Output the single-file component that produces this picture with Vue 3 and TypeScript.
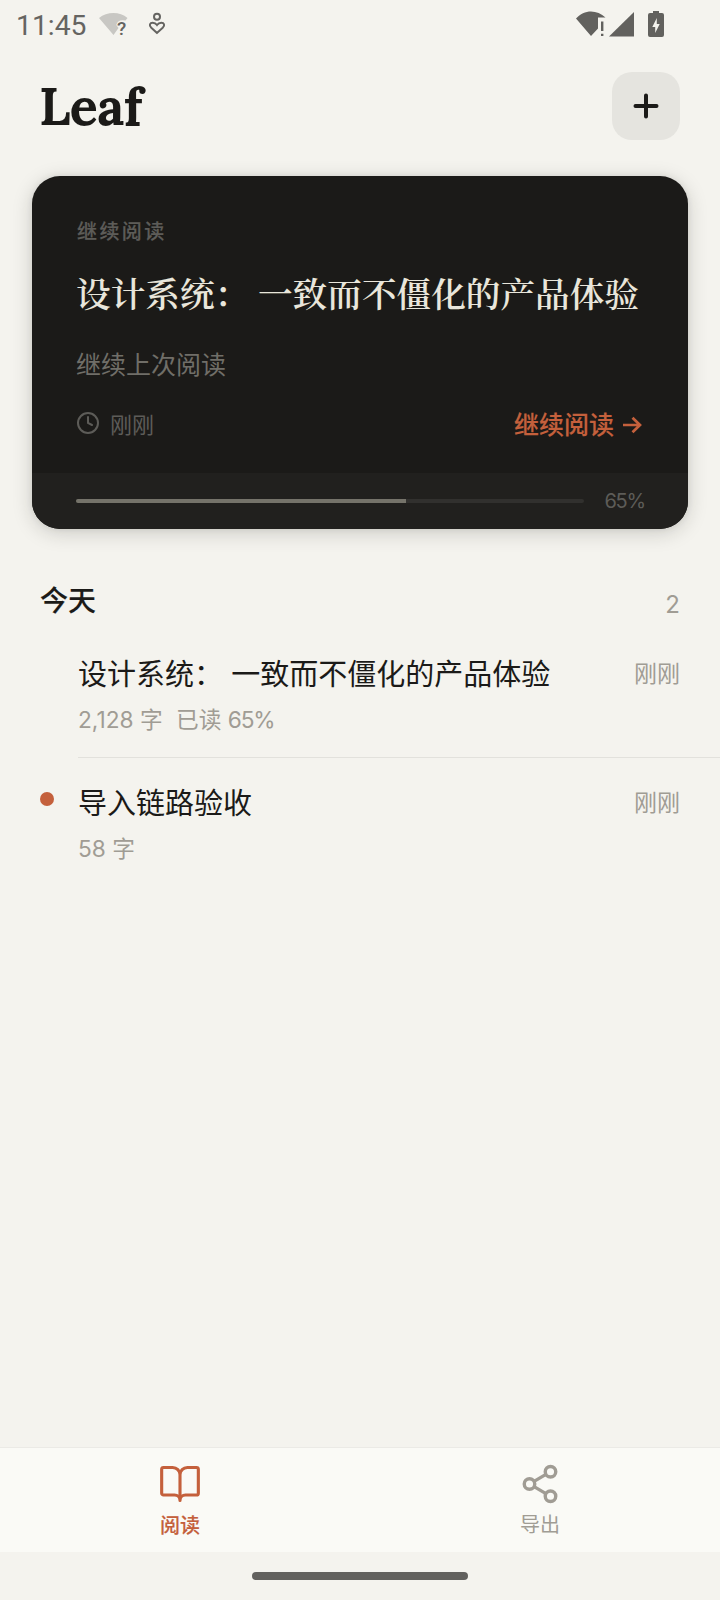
<script setup lang="ts">
interface Article {
  title: string
  words: string
  progress?: number
  time: string
  unread: boolean
}

const current = { title: '设计系统： 一致而不僵化的产品体验', hint: '继续上次阅读', time: '刚刚', progress: 65 }

const articles: Article[] = [
  { title: '设计系统： 一致而不僵化的产品体验', words: '2,128 字', progress: 65, time: '刚刚', unread: false },
  { title: '导入链路验收', words: '58 字', time: '刚刚', unread: true },
]
</script>

<template>
  <div class="screen">
    <div class="status">
      <span class="clock">11:45</span>
      <svg class="wifi-unknown" width="32" height="30" viewBox="0 0 32 30">
        <path d="M0 6C8-.8 21-.8 28.500 6L26.500 8.500Q18.500 7 17.300 13L19.500 16L14.500 23Z" fill="#c8c7c3" />
        <text x="18" y="22.700" class="mark">?</text>
      </svg>
      <svg class="care" width="18" height="24" viewBox="0 0 18 24" fill="none" stroke="#656461" stroke-width="2">
        <circle cx="9" cy="4.800" r="3" />
        <path d="M9 21L3.300 15.800C.6 13.200 2 10.700 4.700 10.700C6.700 10.700 8 11.600 9 13C10 11.600 11.300 10.700 13.300 10.700C16 10.700 17.400 13.200 14.700 15.800Z" />
      </svg>
      <svg class="system" width="90" height="28" viewBox="0 0 90 28" fill="#62615e">
        <path d="M0 7.500C8-1.800 21-1.800 29.500 6.500H22V17.500L15 25Z" />
        <path d="M25 10.500h2.400v9.500H25zM25 22.700h2.400v2.400H25z" />
        <path d="M58 1V25.500H33Z" />
        <path fill-rule="evenodd" d="M77 0h6v2h3q2 0 2 2V24q0 2-2 2H74q-2 0-2-2V4q0-2 2-2h3zM80.800 7L76.300 16h2.900v6L83.700 13h-2.900z" />
      </svg>
    </div>

    <header class="header">
      <h1>Leaf</h1>
      <button class="add" aria-label="添加">
        <svg width="68" height="68" viewBox="0 0 68 68" fill="none" stroke="#1b1a18" stroke-width="4" stroke-linecap="round">
          <path d="M23.500 34h21M34 23.500v21" />
        </svg>
      </button>
    </header>

    <section class="card">
      <div class="card-body">
        <div class="label">继续阅读</div>
        <h2>{{ current.title }}</h2>
        <p>{{ current.hint }}</p>
        <div class="card-row">
          <svg width="24" height="24" viewBox="0 0 24 24" fill="none" stroke="#5d5c58" stroke-width="2" stroke-linecap="round">
            <circle cx="12" cy="12" r="10" />
            <path d="M12 6v6l4 2" />
          </svg>
          <span class="card-time">{{ current.time }}</span>
          <span class="continue">继续阅读</span>
          <svg class="arrow" width="20" height="18" viewBox="0 0 20 18" fill="none" stroke="#c4603c" stroke-width="2.700">
            <path d="M1 9h17M10.500 1.700L18 9l-7.500 7.300" />
          </svg>
        </div>
      </div>
      <div class="card-foot">
        <div class="track"><div class="fill" :style="{ width: current.progress + '%' }"></div></div>
        <span class="percent">{{ current.progress }}%</span>
      </div>
    </section>

    <main>
      <div class="group"><h3>今天</h3><span>{{ articles.length }}</span></div>
      <article v-for="a in articles" :key="a.title" class="item">
        <div class="gutter"><i v-if="a.unread" class="dot"></i></div>
        <div class="content">
          <div class="top"><span class="title">{{ a.title }}</span><span class="time">{{ a.time }}</span></div>
          <div class="meta">
            <span>{{ a.words }}</span>
            <span v-if="a.progress">已读 <span class="percent">{{ a.progress }}%</span></span>
          </div>
        </div>
      </article>
    </main>

    <nav>
      <div class="tab active">
        <svg width="44" height="44" viewBox="0 0 24 24" fill="none" stroke="currentColor" stroke-width="1.700" stroke-linecap="round" stroke-linejoin="round">
          <path d="M12 7v14M3 18a1 1 0 0 1-1-1V4a1 1 0 0 1 1-1h5a4 4 0 0 1 4 4 4 4 0 0 1 4-4h5a1 1 0 0 1 1 1v13a1 1 0 0 1-1 1h-6a3 3 0 0 0-3 3 3 3 0 0 0-3-3z" />
        </svg>
        <span>阅读</span>
      </div>
      <div class="tab">
        <svg width="42" height="42" viewBox="0 0 24 24" fill="none" stroke="currentColor" stroke-width="1.950">
          <circle cx="18" cy="5" r="3" /><circle cx="6" cy="12" r="3" /><circle cx="18" cy="19" r="3" />
          <path d="M8.600 13.500l6.800 4M15.400 6.500l-6.800 4" />
        </svg>
        <span>导出</span>
      </div>
    </nav>
    <div class="home"><i></i></div>
  </div>
</template>

<style>
body { margin: 0; background: #f4f3ee; }
</style>

<style scoped>
.screen {
  width: 720px; height: 1600px; display: flex; flex-direction: column; overflow: hidden;
  background: #f4f3ee; color: #1b1a18; font-family: Inter, "Noto Sans CJK SC", sans-serif;
}
h1, h2, h3, p { margin: 0; }
svg { display: block; flex: none; }
.status { height: 48px; display: flex; box-sizing: border-box; padding: 11px 54px 0 16px; color: #656461; }
.clock { width: 83px; font: 28.300px/30px Roboto, sans-serif; }
.wifi-unknown { margin-top: 1px; }
.mark { font: 500 19px Roboto, sans-serif; fill: #656461; }
.care { margin: 1px 0 0 17px; }
.system { margin-left: auto; }
.header { height: 128px; box-sizing: border-box; padding: 24px 40px 0 39px; display: flex; justify-content: space-between; }
h1 { font: 700 52px/68px Lora, "Noto Serif", "Liberation Serif", serif; letter-spacing: -.700px; }
.add { width: 68px; height: 68px; padding: 0; border: 0; border-radius: 20px; background: #e5e4df; }
.card {
  margin: 0 32px; height: 353px; flex: none; border-radius: 28px; overflow: hidden; background: #1b1a18;
  box-shadow: 0 4px 20px rgba(28, 27, 24, .18), 0 0 6px rgba(28, 27, 24, .08);
}
.card-body { height: 297px; box-sizing: border-box; padding: 41px 44px 0; }
.label { padding-left: 1px; font-size: 20px; font-weight: 500; -webkit-text-stroke: .2px; line-height: 30px; letter-spacing: 2.400px; color: #5d5c58; }
h2 { margin-top: 21px; font: 600 34.650px/48px "Noto Serif CJK SC", "Noto Serif SC", "Noto Sans CJK SC", serif; color: #e9e6db; white-space: nowrap; }
p { margin-top: 30px; font-size: 25px; line-height: 38px; color: #706e68; }
.card-row { height: 40px; margin-top: 19px; display: flex; align-items: center; color: #5d5c58; }
.card-time { margin-left: 10px; font-size: 22px; }
.continue { margin-left: auto; font-size: 25px; font-weight: 500; -webkit-text-stroke: .15px; color: #c4603c; }
.arrow { margin: 3px 2px 0 8px; }
.card-foot { height: 56px; padding: 0 43px 0 44px; display: flex; align-items: center; justify-content: space-between; background: #21201e; font-size: 20px; color: #5d5c58; }
.percent { letter-spacing: -1.200px; }
.track { width: 508px; height: 4px; border-radius: 2px; background: #31302e; overflow: hidden; }
.fill { height: 100%; background: #75736a; }
main { flex: 1; padding-top: 51px; }
.group { height: 62px; padding: 0 40px; display: flex; justify-content: space-between; color: #a09c94; }
h3 { font-size: 28px; line-height: 42px; font-weight: 500; -webkit-text-stroke: .15px; color: #1b1a18; }
.group span { font-size: 24px; line-height: 50px; }
.item { display: flex; height: 129px; }
.gutter { width: 78px; box-sizing: border-box; padding: 21px 0 0 40px; }
.dot { display: block; width: 14px; height: 14px; border-radius: 50%; background: #c4603c; }
.content { flex: 1; box-sizing: border-box; padding-top: 9px; height: 116px; border-bottom: 1px solid #e2e1dc; }
.item:last-child .content { border: 0; }
.top { display: flex; justify-content: space-between; align-items: center; height: 42px; padding-right: 40px; }
.title { font-size: 29px; white-space: nowrap; }
.time { font-size: 23px; color: #a09c94; }
.meta { display: flex; gap: 13.500px; margin-top: 7px; font-size: 22.700px; line-height: 40px; color: #a09c94; }
nav { height: 105px; box-sizing: border-box; border-top: 1px solid #ebeae6; background: #fafaf6; display: flex; }
.tab { flex: 1; padding-top: 15px; display: flex; flex-direction: column; align-items: center; color: #a09c94; font-size: 20px; line-height: 30px; }
.tab span { margin-top: 5px; }
.active { padding-top: 14px; color: #c4603c; font-weight: 500; -webkit-text-stroke: .15px; }
.home { height: 48px; display: flex; justify-content: center; }
.home i { width: 216px; height: 8px; margin-top: 20px; border-radius: 4px; background: #62615e; }
</style>
